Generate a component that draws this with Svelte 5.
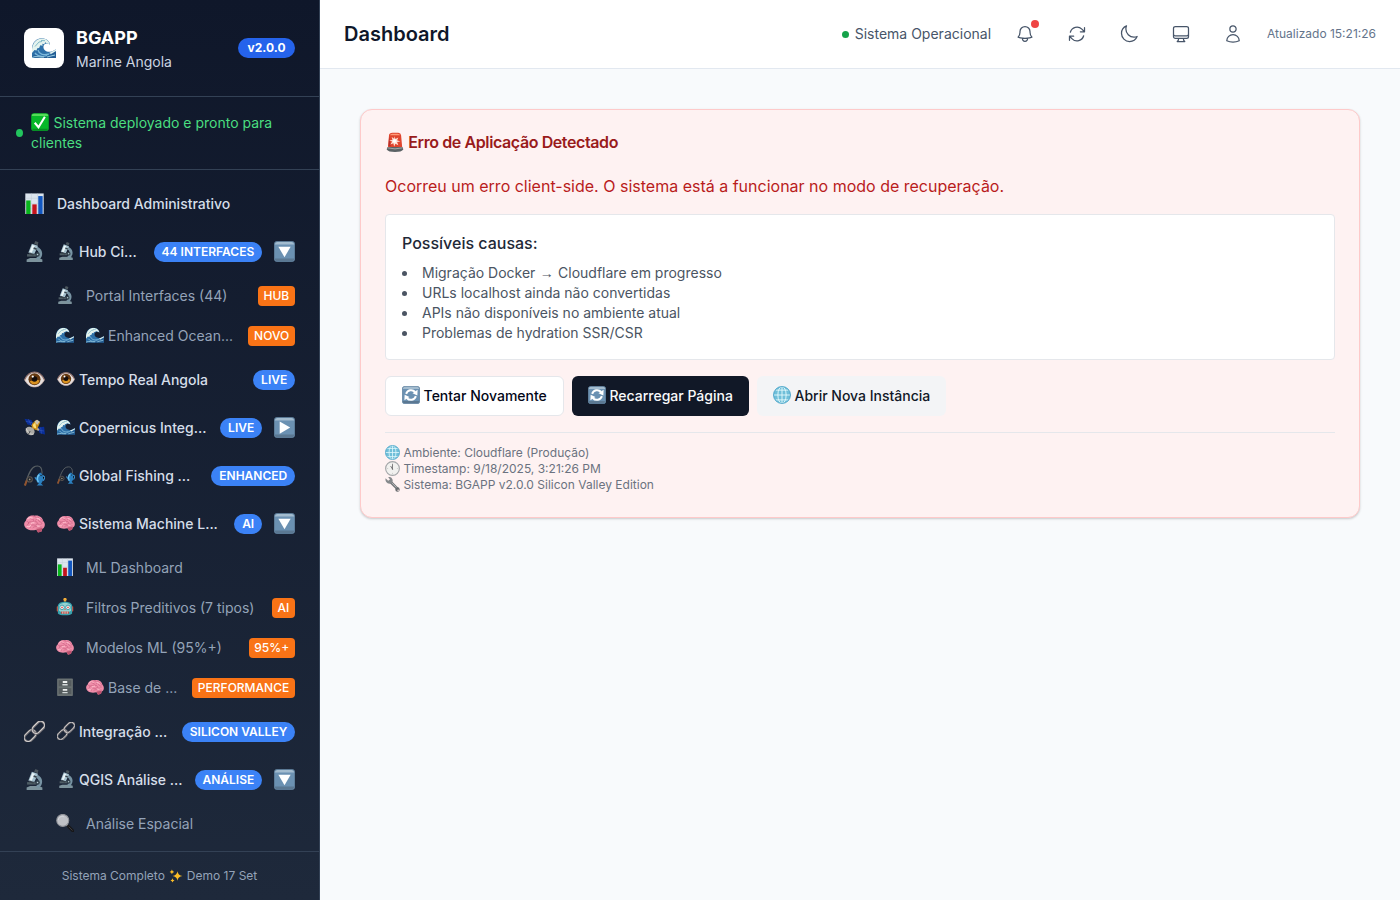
<script>
  const nav = [
    { icon: 'chart', text: 'Dashboard Administrativo' },
    { icon: 'scope', lead: 'scope', text: 'Hub Ci...', badge: '44 INTERFACES', toggle: 'down' },
    { sub: true, icon: 'scope', text: 'Portal Interfaces (44)', badge: 'HUB' },
    { sub: true, icon: 'wave', lead: 'wave', text: 'Enhanced Ocean...', badge: 'NOVO' },
    { icon: 'eye', lead: 'eye', text: 'Tempo Real Angola', badge: 'LIVE' },
    { icon: 'satellite', lead: 'wave', text: 'Copernicus Integ...', badge: 'LIVE', toggle: 'right' },
    { icon: 'fishing', lead: 'fishing', text: 'Global Fishing ...', badge: 'ENHANCED' },
    { icon: 'brain', lead: 'brain', text: 'Sistema Machine L...', badge: 'AI', toggle: 'down' },
    { sub: true, icon: 'chart', text: 'ML Dashboard' },
    { sub: true, icon: 'robot', text: 'Filtros Preditivos (7 tipos)', badge: 'AI' },
    { sub: true, icon: 'brain', text: 'Modelos ML (95%+)', badge: '95%+' },
    { sub: true, icon: 'cabinet', lead: 'brain', text: 'Base de ...', badge: 'PERFORMANCE' },
    { icon: 'link', lead: 'link', text: 'Integração ...', badge: 'SILICON VALLEY' },
    { icon: 'scope', lead: 'scope', text: 'QGIS Análise ...', badge: 'ANÁLISE', toggle: 'down' },
    { sub: true, icon: 'magnifier', text: 'Análise Espacial' }
  ];
  const tools = [
    { label: 'Notificações', dot: true, d: 'M14.857 17.082a23.848 23.848 0 005.454-1.31A8.967 8.967 0 0118 9.75v-.7V9A6 6 0 006 9v.75a8.967 8.967 0 01-2.312 6.022c1.733.64 3.56 1.085 5.455 1.31m5.714 0a24.255 24.255 0 01-5.714 0m5.714 0a3 3 0 11-5.714 0' },
    { label: 'Atualizar', d: 'M16.023 9.348h4.992v-.001M2.985 19.644v-4.992m0 0h4.992m-4.993 0l3.181 3.183a8.25 8.25 0 0013.803-3.7M4.031 9.865a8.25 8.25 0 0113.803-3.7l3.181 3.182m0-4.991v4.99' },
    { label: 'Tema', d: 'M21.752 15.002A9.718 9.718 0 0118 15.75c-5.385 0-9.75-4.365-9.75-9.75 0-1.33.266-2.597.748-3.752A9.753 9.753 0 003 11.25C3 16.635 7.365 21 12.75 21a9.753 9.753 0 009.002-5.998z' },
    { label: 'Ecrã', d: 'M9 17.25v1.007a3 3 0 01-.879 2.122L7.5 21h9l-.621-.621A3 3 0 0115 18.257V17.25m6-12V15a2.25 2.25 0 01-2.25 2.25H5.25A2.25 2.25 0 013 15V5.25m18 0A2.25 2.25 0 0018.75 3H5.25A2.25 2.25 0 003 5.25m18 0V12a2.25 2.25 0 01-2.25 2.25H5.25A2.25 2.25 0 013 12V5.25' },
    { label: 'Perfil', d: 'M15.75 6a3.75 3.75 0 11-7.5 0 3.75 3.75 0 017.5 0zM4.501 20.118a7.5 7.5 0 0114.998 0A17.933 17.933 0 0112 21.75c-2.676 0-5.216-.584-7.499-1.632z' }
  ];
</script>

{#snippet glyph(name)}
  <svg class="glyph" viewBox="0 0 24 24" aria-hidden="true">
    {#if name === 'chart'}
      <rect x="1.5" y=".5" width="21" height="23.5" fill="#dce5ee" />
      <path d="M1.500 6h21M1.500 12h21M1.500 18h21M8.500.5V24M15.500.5V24" stroke="#bccbd9" stroke-width=".5" />
      <rect x="2.500" y="8.500" width="5" height="15.500" fill="#08b51c" />
      <rect x="9.500" y="13" width="5" height="11" fill="#c5131c" />
      <rect x="16.300" y="3.500" width="5" height="20.500" fill="#1257c0" />
    {:else if name === 'scope'}
      <path d="M3 24v-3l4-1.500h10l4 1.500v3z" fill="#7d939c" />
      <path d="M14 8c6 2.500 6.500 9 1 13" fill="none" stroke="#7894a3" stroke-width="3.800" />
      <path d="M3.500 15h10.500v2.800H3.500z" fill="#4e5d65" />
      <path d="M7.500 14.500 5 13l4-10 7 2.500-4 9z" fill="#a5c0cd" />
      <path d="m11.500 3 1.500-3 3.500 1.300-.8 3.500z" fill="#4b565d" />
      <path d="m9.500 4.500 3 1-3.700 8-2.500-1z" fill="#e9f4f7" />
      <path d="m11 8 3.500 1.500M6 14l5 2" stroke="#39444c" stroke-width="1.800" />
      <circle cx="15.500" cy="15.500" r="2.600" fill="#34444f" /><circle cx="15.500" cy="15.500" r=".9" fill="#b8cbd4" />
    {:else if name === 'wave'}
      <path d="M0 22V12C.5 6 5 2 10 2.300c5 .2 8 3.500 8 6.500-2.500-2-6-1.500-6.500 1.500-.7 4 4 6.500 8 5.200 2-.6 3.500-2 4.500-2V22z" fill="#2d70a8" />
      <path d="M0 13C1 6 5 2.500 10 2.500c4.500 0 7.500 3 7.800 6.200-1.300-1-2.200-1.300-3-1.200l-1.500-1.200-1 1.900-2-.5.300 2-2.300-.4-1.200 2.700-1.800.2-.8 2.300L2.500 14 0 17z" fill="#e4f3ee" />
      <path d="M3 10.500 7 6l3-.5M9 4.500l4 .2" stroke="#84bbc9" fill="none" />
      <path d="M6 14c1 4 5 5.500 11 4M3 17c3 4 8 4 12 3" fill="none" stroke="#7bb7da" stroke-width="1.300" />
      <path d="M0 20c3-1.500 5-.5 8 .7 4 1 8-1 11-2 2-1 3-3 5-3.500V22H0z" fill="#235c93" />
      <path d="m17 17 3-1.500 4-2v1.500l-5 3z" fill="#e1f1ee" />
      <path d="M0 21.500c4-2 8 0 12-.5M15 21l8-2" stroke="#9bd0e4" fill="none" />
    {:else if name === 'eye'}
      <path d="M.5 12.500C3 7 7.500 3.500 12 3.500s9 3.500 11.500 9C20 18.500 16.500 20.500 12 20.500S4 18.500.5 12.500z" fill="#e6e0de" />
      <path d="M.5 12.500C3 7 7.500 3.500 12 3.500s9 3.500 11.500 9" fill="none" stroke="#92736d" stroke-width="1.400" />
      <path d="M1 12.800C4.500 18.500 8 20.500 12 20.500s8-2 11-7.700" fill="none" stroke="#c6aaa3" stroke-width=".8" />
      <circle cx="12" cy="11.800" r="6.900" fill="#65380f" />
      <path d="M6.500 14a6 6 0 0 0 11.300-1l-4-1z" fill="#d99220" />
      <circle cx="12" cy="11.500" r="3.200" fill="#130d0c" /><circle cx="10" cy="8.700" r="1.300" fill="#fff" />
    {:else if name === 'satellite'}
      <path d="m.5 2 8 1.500 3 6.500L4 8.500zM15 12l8-1 1 9-6-1.500z" fill="#092e98" />
      <path d="m2 5 8 1.500M5 2.500l3 6.500M16 15l7 1M19 12l1 7" stroke="#4566c4" stroke-width=".5" />
      <path d="m9 9 8 6" stroke="#b4aba0" stroke-width="2.500" />
      <path d="m9 8 5-5 4.500 3-4 9-5.500-2z" fill="#c98d18" />
      <path d="m12 5 3-2 3 2-3 4z" fill="#c8c3b5" /><path d="m10 9 3-3 1 7-3-1z" fill="#ffe078" />
      <ellipse cx="7" cy="16" rx="5.500" ry="4.500" transform="rotate(38 7 16)" fill="#aaa9a5" />
      <path d="M2.500 13c1.500 5 5 7.500 8.500 6.500" fill="none" stroke="#e2e0da" /><path d="m7 16-2 4" stroke="#404247" />
    {:else if name === 'fishing'}
      <path d="M1 23C4 14 7 3 13 1.500S21 4 20.500 10" fill="none" stroke="#596064" stroke-width="1.300" />
      <path d="M1 23.500 3.500 17" stroke="#92542e" stroke-width="2.300" />
      <circle cx="6.500" cy="16.500" r="3" fill="#22272c" stroke="#5b5551" stroke-width="1.200" /><circle cx="6.500" cy="16.500" r="1" fill="#9c9183" />
      <path d="M18.500 8.500c5 3 4.500 9 1 12.500l2.500 2.500h-7.500l2.500-2.500C12.500 18.500 13 12 18.500 8.500z" fill="#2b80c0" />
      <path d="M17.500 11c-2.500 2-3 6-1 8.500" stroke="#71c5f1" stroke-width="1.700" fill="none" />
      <path d="m21.500 12 2.500 2-2 4M12.500 14l2 3" stroke="#3b91d0" stroke-width="1.500" /><circle cx="19.500" cy="12" r=".8" fill="#10202f" />
    {:else if name === 'brain'}
      <path d="M2 17C-1 14 .2 10 2 9 3 4 8 2 12 3c5-1 9 2 10 6 3 3 2 8-1 9l-1 3-4 1-2-3c-4 1-9 1-12-2z" fill="#ef8da9" />
      <path d="m14 18 7-1-1 4-4 1.500z" fill="#bd526e" />
      <path d="M3 10c3-1 3 3 0 4M7 5c0 3 5 1 4 4-1 3-5-1-6 3M10 3.500c4 0 6 3 3 5M16 4c-1 3 6 2 5 6M12 10c4-1 4 3 1 4-4-1-6 0-6 3M17 8c-2 2 5 2 3 5M10 17c3-3 7 0 11-1M16 12c-1 2 2 2 3 1" fill="none" stroke="#c65e7e" stroke-width=".8" />
      <path d="M4 7c2-3 4-2 6-1M14 6c3 0 4 1 4 2M8 12c2-2 3 0 4-1M3 15c3 2 4 0 5-1M15 15l3 0" fill="none" stroke="#ffc0ce" stroke-width="1.300" />
    {:else if name === 'robot'}
      <path d="M12 2v5" stroke="#d78b2c" stroke-width="1.800" /><circle cx="12" cy="2" r="2.200" fill="#f4ad38" />
      <rect x="1" y="11" width="3" height="7" rx="1" fill="#cb5240" /><rect x="20" y="11" width="3" height="7" rx="1" fill="#cb5240" />
      <path d="M2.500 20.500V10c1-4 5-5 9.500-5s8.500 1 9.500 5v10.500c-2 3.500-17 3.500-19 0z" fill="#38a2ae" />
      <path d="M4 10c3-5 13-5 16 0v7c-4 3-12 3-16 0z" fill="#94d3d3" />
      <circle cx="8" cy="12.500" r="3" fill="#f4ffff" stroke="#218798" /><circle cx="16" cy="12.500" r="3" fill="#f4ffff" stroke="#218798" />
      <circle cx="8" cy="12.500" r="1.200" fill="#e45952" /><circle cx="16" cy="12.500" r="1.200" fill="#e45952" />
      <path d="m12 14-1 2h2z" fill="#d7483f" /><rect x="6.500" y="18" width="11" height="3" rx="1" fill="#bf5147" /><path d="M9 18v3m3-3v3m3-3v3" stroke="#eee" />
    {:else if name === 'cabinet'}
      <rect x="1.500" y=".5" width="21" height="23.500" rx="1" fill="#697071" />
      <path d="M3 2.500h18v9H3zm0 10.500h18v9H3z" fill="#555c5e" stroke="#737b7c" stroke-width=".6" />
      <path d="M9 4h6v2.500H9zm0 10.500h6V17H9z" fill="#edf0ef" /><path d="M8.500 9h7m-7 10.500h7" stroke="#d4d9d9" stroke-width="1.700" />
    {:else if name === 'link'}
      <g fill="none" transform="rotate(-45 12 12)">
        <rect x="-2.500" y="7.500" width="15" height="9" rx="4.500" stroke="#69686c" stroke-width="2.800" />
        <rect x="-2.500" y="7.200" width="15" height="9" rx="4.500" stroke="#d7d4d3" stroke-width="1.100" />
        <rect x="10.500" y="7.500" width="16" height="9" rx="4.500" stroke="#6d6b70" stroke-width="2.800" />
        <rect x="10.500" y="7.200" width="16" height="9" rx="4.500" stroke="#e1dcda" stroke-width="1.100" />
      </g>
    {:else if name === 'magnifier'}
      <path d="m14 14 3 3" stroke="#99999b" stroke-width="2.500" /><path d="m16.500 16.500 6 6" stroke="#171719" stroke-width="3.800" stroke-linecap="round" />
      <path d="m17 17 5 5" stroke="#54565a" stroke-width=".8" />
      <circle cx="9" cy="8.500" r="8" fill="#bfc1c6" stroke="#909399" stroke-width="1.400" />
      <path d="M3 8c.5-4 5-6 8-4" fill="none" stroke="#d9dce0" />
    {:else if name === 'down' || name === 'right' || name === 'cycle'}
      <rect x=".2" y=".2" width="23.600" height="23.600" rx="3.500" fill="#6b91b2" />
      <path d="M1 4Q1 1 4 1h16q3 0 3 3z" fill="#a3bccf" />
      <path d="M1 20h22Q23 23 20 23H4q-3 0-3-3z" fill="#5b7892" />
      <rect x=".4" y=".4" width="23.200" height="23.200" rx="3.500" fill="none" stroke="#607d97" stroke-width=".7" />
      {#if name === 'down'}<path d="M5 6.500h14l-7 12z" fill="#fff" />
      {:else if name === 'right'}<path d="M6.500 5v14l12-7z" fill="#fff" />
      {:else}
        <path d="M5.500 10.500a7 7 0 0 1 12-2.500M18.500 13.500a7 7 0 0 1-12 2.500" fill="none" stroke="#fff" stroke-width="2.600" />
        <path d="m20.800 5-.3 7.500-6.500-3zM3.200 19l.3-7.500 6.500 3z" fill="#fff" />
      {/if}
    {:else if name === 'check'}
      <rect x=".3" y=".3" width="23.400" height="23.400" rx="3.500" fill="#07b829" />
      <path d="M1 4q0-3 3-3h16q3 0 3 3z" fill="#55dc58" /><path d="M1 21h22l-2 2H3z" fill="#078c22" />
      <path d="m5 13 5 6L18.500 5" fill="none" stroke="#fff" stroke-width="2.800" />
    {:else if name === 'siren'}
      <path d="M3.500 20 4.800 4Q5 1 9 .8h7Q19 1 19.300 4l1.500 16z" fill="#df452d" />
      <path d="M6 4q0-2 3-2h6q3 0 3 2z" fill="#ff9a78" /><path d="m5 5-1 12h3z" fill="#b92d28" />
      <path d="m11.500 5 1 3.500 3.500-2-1.500 3.500 4 1.500-4 .5 1.500 4-3.500-2-1.500 3.500-1-4-3.500 1.500 2-3.500-3.500-1.500 4-.5-1-3.500 3 2z" fill="#ffe2d7" />
      <circle cx="11.500" cy="10.800" r="2" fill="#fff" /><path d="M3 18h18l1 3q-2 3-10 3T2 21z" fill="#5b6265" /><path d="M3 19q9 2.500 18 0" fill="none" stroke="#b1b4b2" />
    {:else if name === 'globe'}
      <circle cx="12" cy="12" r="11.300" fill="#70bfd9" />
      <path d="M12 .8v22.400M.8 12h22.400M3.500 5.500h17M3.500 18.500h17" stroke="#e5fafd" stroke-width="1.200" />
      <ellipse cx="12" cy="12" rx="5.500" ry="11.200" fill="none" stroke="#e5fafd" stroke-width="1.200" />
      <circle cx="12" cy="12" r="11.300" fill="none" stroke="#4aa4c8" stroke-width="1.200" />
    {:else if name === 'clock'}
      <circle cx="12" cy="12" r="11" fill="#f1f1ef" stroke="#a3a6a8" stroke-width="1.800" />
      <path d="M12 13V5M12 13 9 8" stroke="#4a4b4d" stroke-width="1.100" />
      <path d="M12 2.500v2M21 12h-2M12 21v-2M3 12h2" stroke="#bbb" /><circle cx="12" cy="13" r="1" fill="#777" />
    {:else if name === 'wrench'}
      <path d="m9 8 11 11" stroke="#727679" stroke-width="4.500" /><path d="m9 7.500 11 11" stroke="#b5b8ba" stroke-width="1.500" />
      <path d="m1 2 4 4 3-2-3-4q5-1 7 4 1 4-2 6-5 2-8-2Q0 5 1 2z" fill="#85898c" />
      <circle cx="20" cy="20" r="3.500" fill="#676b6e" /><circle cx="21" cy="21" r="1.200" fill="#fee8e8" />
    {:else if name === 'sparkles'}
      <path d="M14.500 4q1 7 8.500 8-7.500 1-8.500 8-1-7-8.500-8 7.500-1 8.500-8zM5 1q.5 3.500 4 4-3.500.5-4 4-.5-3.500-4-4 3.500-.5 4-4zM6 16q.5 3 3.500 3.500-3 .5-3.500 3.500-.5-3-3.500-3.500 3-.5 3.500-3.500z" fill="#fbbd27" />
    {/if}
  </svg>
{/snippet}

<div class="app">
  <aside>
    <div class="brand">
      <div class="logo">{@render glyph('wave')}</div>
      <div class="names"><strong>BGAPP</strong><span>Marine Angola</span></div>
      <span class="version">v2.0.0</span>
    </div>
    <div class="deploy">
      <i></i>
      <p>{@render glyph('check')}Sistema deployado e pronto para clientes</p>
    </div>
    <nav>
      {#each nav as item}
        <div class="row" class:sub={item.sub}>
          <span class="ico">{@render glyph(item.icon)}</span>
          <span class="text">{#if item.lead}<span class="lead">{@render glyph(item.lead)}</span>{/if}{item.text}</span>
          {#if item.badge}<span class="badge">{item.badge}</span>{/if}
          {#if item.toggle}<span class="toggle">{@render glyph(item.toggle)}</span>{/if}
        </div>
      {/each}
    </nav>
    <footer><span>Sistema Completo</span>{@render glyph('sparkles')}<span>Demo 17 Set</span></footer>
  </aside>

  <section class="page">
    <header>
      <h1>Dashboard</h1>
      <div class="tools">
        <div class="status"><i></i>Sistema Operacional</div>
        {#each tools as tool}
          <button class="tool" aria-label={tool.label}>
            <svg viewBox="0 0 24 24"><path d={tool.d} /></svg>
            {#if tool.dot}<i class="alert"></i>{/if}
          </button>
        {/each}
        <span class="time">Atualizado 15:21:26</span>
      </div>
    </header>
    <main>
      <article>
        <h2>{@render glyph('siren')}Erro de Aplicação Detectado</h2>
        <p class="message">Ocorreu um erro client-side. O sistema está a funcionar no modo de recuperação.</p>
        <div class="causes">
          <h3>Possíveis causas:</h3>
          <ul>
            <li>Migração Docker <span class="arrow">→</span> Cloudflare em progresso</li>
            <li>URLs localhost ainda não convertidas</li>
            <li>APIs não disponíveis no ambiente atual</li>
            <li>Problemas de hydration SSR/CSR</li>
          </ul>
        </div>
        <div class="actions">
          <button class="outline">{@render glyph('cycle')}Tentar Novamente</button>
          <button class="dark">{@render glyph('cycle')}Recarregar Página</button>
          <button class="soft">{@render glyph('globe')}Abrir Nova Instância</button>
        </div>
        <div class="details">
          <div>{@render glyph('globe')}Ambiente: Cloudflare (Produção)</div>
          <div>{@render glyph('clock')}Timestamp: 9/18/2025, 3:21:26 PM</div>
          <div>{@render glyph('wrench')}Sistema: BGAPP v2.0.0 Silicon Valley Edition</div>
        </div>
      </article>
    </main>
  </section>
</div>

<style>
  :global(body) { margin: 0; overflow: hidden; }
  * { box-sizing: border-box; }
  .app { display: flex; width: 100%; height: 100vh; font-family: Inter, sans-serif; font-size: 14px; line-height: 20px; background: #f8fafc; }
  h1, h2, h3, p, ul { margin: 0; padding: 0; }
  button { font: inherit; border: 0; padding: 0; }
  .glyph { width: 18px; height: 18px; flex: none; display: block; }

  aside { width: 320px; flex: none; display: flex; flex-direction: column; border-right: 1px solid #334155; background: linear-gradient(180deg, #0f172a, #1e293b); color: #d5dee9; }
  .brand { height: 97px; flex: none; padding: 0 24px; display: flex; align-items: center; border-bottom: 1px solid #334155; }
  .logo { width: 40px; height: 40px; border-radius: 8px; background: #fff; display: grid; place-items: center; margin-right: 12px; }
  .logo .glyph { width: 24px; height: 24px; }
  .names { flex: 1; display: flex; flex-direction: column; }
  .names strong { font-size: 18px; line-height: 28px; font-weight: 700; color: #fff; }
  .names span { color: #cbd5e1; }
  .version { background: #2563eb; color: #fff; font-size: 12px; line-height: 16px; font-weight: 700; padding: 2px 9.5px; border-radius: 10px; }
  .deploy { height: 73px; flex: none; padding: 16px; display: flex; align-items: center; gap: 8px; color: #4ade80; border-bottom: 1px solid #334155; }
  .deploy i { width: 7px; height: 8px; flex: none; border-radius: 50%; background: #22c55e; }
  .deploy .glyph { display: inline-block; vertical-align: -3px; margin: -2px 4.5px 0 0; }

  nav { flex: 1; min-height: 0; padding: 10px 24px 0; overflow: hidden; }
  .row { height: 48px; display: flex; align-items: center; font-weight: 500; white-space: nowrap; }
  .ico { width: 21px; margin-right: 12px; flex: none; position: relative; top: -1px; }
  .row .ico .glyph { width: 21px; height: 21px; }
  .text { flex: 1; display: flex; align-items: center; }
  .lead { margin-right: 4px; position: relative; top: -1px; }
  .toggle { margin-left: 12px; position: relative; top: -1px; }
  .toggle .glyph { width: 21px; height: 21px; }
  .badge { color: #fff; background: #3b82f6; font-size: 12px; line-height: 16px; font-weight: 600; padding: 2px 7.8px; border-radius: 10px; }
  .sub { height: 40px; padding-left: 32px; font-weight: 400; color: #94a3b8; }
  .sub .ico { width: 18px; }
  .row.sub .ico .glyph { width: 18px; height: 18px; }
  .sub .badge { background: #f97316; font-weight: 500; padding: 2px 5.8px; border-radius: 4px; }
  footer { height: 49px; flex: none; border-top: 1px solid #334155; display: flex; align-items: center; justify-content: center; gap: 4px; color: #94a3b8; font-size: 12px; }
  footer .glyph { width: 14px; height: 14px; }

  .page { flex: 1; min-width: 0; }
  header { height: 69px; padding: 0 24px; display: flex; align-items: center; justify-content: space-between; background: #fff; border-bottom: 1px solid #e2e8f0; }
  h1 { font-size: 20px; line-height: 28px; font-weight: 600; color: #0f172a; }
  .tools { display: flex; align-items: center; gap: 16px; color: #475569; }
  .status { display: flex; align-items: center; gap: 5.500px; }
  .status i { width: 7px; height: 7px; margin-top: 1px; border-radius: 50%; background: #16a34a; }
  .tool { width: 36px; height: 36px; position: relative; display: grid; place-items: center; background: transparent; color: #475569; }
  .tool svg { width: 20px; height: 20px; fill: none; stroke: currentColor; stroke-width: 1.5; stroke-linecap: round; stroke-linejoin: round; }
  .alert { position: absolute; top: 4px; right: 4px; width: 8px; height: 8px; border-radius: 50%; background: #ef4444; }
  .time { font-size: 12px; color: #64748b; }

  main { padding: 40px; }
  article { padding: 24px; border: 1px solid #fecaca; border-radius: 12px; background: #fef2f2; box-shadow: 0 1px 3px rgba(0, 0, 0, .1), 0 1px 2px rgba(0, 0, 0, .1); }
  h2 { display: flex; align-items: center; gap: 3.300px; height: 16px; font-size: 16px; line-height: 16px; font-weight: 600; letter-spacing: -.4px; color: #991b1b; }
  h2 .glyph { width: 20px; height: 20px; }
  .message { margin: 24px 0 16px; font-size: 16px; line-height: 24px; color: #b91c1c; }
  .causes { padding: 16px; border: 1px solid #e5e7eb; border-radius: 4px; background: #fff; }
  h3 { font-size: 16px; line-height: 24px; font-weight: 500; color: #1f2937; margin-bottom: 8px; }
  ul { list-style: none; color: #4b5563; }
  li::before { content: ""; display: inline-block; width: 5px; height: 5px; margin-right: 15px; vertical-align: 2px; border-radius: 50%; background: currentColor; }
  .arrow { font-family: "Liberation Sans", sans-serif; line-height: 1; margin: 0 .4px; }
  .actions { display: flex; gap: 8px; margin: 16px 0; }
  .actions button { height: 40px; padding: 0 16px; border-radius: 6px; display: flex; align-items: center; gap: 3.600px; font-weight: 500; color: #020617; }
  .actions .glyph { margin-top: -2px; }
  .actions .outline { border: 1px solid #e5e7eb; background: #fff; }
  .actions .dark { background: #111827; color: #f9fafb; }
  .actions .soft { background: #f3f4f6; color: #111827; }
  .details { padding-top: 12px; border-top: 1px solid #e5e7eb; font-size: 12px; line-height: 16px; color: #6b7280; }
  .details div { display: flex; align-items: center; gap: 3.400px; height: 16px; }
  .details .glyph { width: 15px; height: 15px; margin-top: -1px; }
</style>
